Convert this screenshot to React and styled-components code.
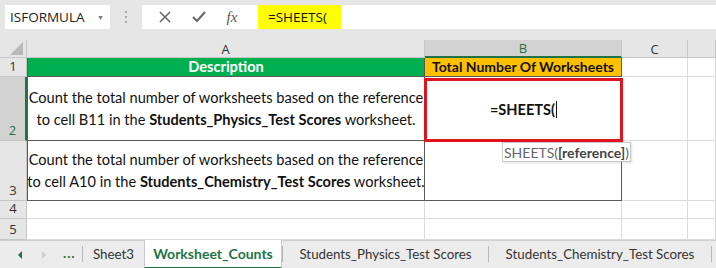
import styled, { createGlobalStyle } from "styled-components";

const Global = createGlobalStyle`
  html, body { margin: 0; padding: 0; background: #e6e6e6; }
  body { width: 716px; height: 268px; overflow: hidden; font-family: "Lato", "Open Sans", sans-serif; }
`;

const Screen = styled.div`
  width: 716px;
  height: 268px;
  display: flex;
  flex-direction: column;
  background: #e6e6e6;
  overflow: hidden;
  & > * { flex-shrink: 0; }
`;

const FormulaBar = styled.div`
  height: 40px;
  display: flex;
  align-items: flex-start;
  padding-top: 5px;
  box-sizing: border-box;
`;

const NameBox = styled.div`
  margin-left: 5px;
  width: 105px;
  height: 24px;
  background: #fff;
  display: flex;
  align-items: center;
  justify-content: space-between;
  padding: 0 6px 0 5px;
  box-sizing: border-box;
  font-family: "Open Sans", sans-serif;
  font-size: 13.5px;
  color: #222;
`;

const Caret = styled.span`
  font-size: 7px;
  color: #777;
`;

const Grip = styled.div`
  width: 32px;
  height: 24px;
  display: flex;
  flex-direction: column;
  align-items: center;
  justify-content: center;
  gap: 3px;
  span { width: 2px; height: 2px; background: #aaa; }
`;

const ButtonsBox = styled.div`
  width: 111px;
  height: 24px;
  background: #fff;
  display: flex;
  align-items: center;
  justify-content: space-around;
  padding: 0 6px;
  box-sizing: border-box;
  color: #666;
`;

const Fx = styled.span`
  font-family: "Liberation Serif", serif;
  font-style: italic;
  font-size: 15px;
  color: #555;
`;

const Input = styled.div`
  flex: 1;
  height: 24px;
  background: #fff;
  display: flex;
  align-items: stretch;
  padding-left: 5px;
`;

const Highlight = styled.span`
  background: #ffff00;
  display: flex;
  align-items: center;
  padding: 0 14px 0 10px;
  font-family: "Open Sans", sans-serif;
  font-size: 13.5px;
  color: #111;
`;

const Sheet = styled.div`
  display: grid;
  grid-template-columns: 27px 398px 197px 66px 28px;
  grid-template-rows: 18px 19px 64px 60px 18px 21px;
  background: #fff;
  position: relative;
`;

const Corner = styled.div`
  background: #e6e6e6;
  border-right: 1px solid #c6c6c6;
  border-bottom: 1px solid #c6c6c6;
  box-sizing: border-box;
  position: relative;
  &::after {
    content: "";
    position: absolute;
    right: 3px;
    bottom: 2px;
    border-left: 13px solid transparent;
    border-bottom: 13px solid #b9b9b9;
  }
`;

const ColHead = styled.div`
  background: ${(p) => (p.$active ? "#d2d2d2" : "#e6e6e6")};
  color: ${(p) => (p.$active ? "#217346" : "#333")};
  border-right: 1px solid #c6c6c6;
  border-bottom: ${(p) => (p.$active ? "2px solid #217346" : "1px solid #c6c6c6")};
  box-sizing: border-box;
  display: flex;
  align-items: center;
  justify-content: center;
  font-family: "Open Sans", sans-serif;
  font-size: 13px;
`;

const RowHead = styled.div`
  background: ${(p) => (p.$active ? "#d2d2d2" : "#e6e6e6")};
  color: ${(p) => (p.$active ? "#217346" : "#333")};
  border-right: ${(p) => (p.$active ? "2px solid #217346" : "1px solid #c6c6c6")};
  border-bottom: 1px solid #c6c6c6;
  box-sizing: border-box;
  display: flex;
  align-items: flex-end;
  justify-content: center;
  padding-bottom: 1px;
  font-family: "Open Sans", sans-serif;
  font-size: 13px;
`;

const Cell = styled.div`
  box-sizing: border-box;
  border-right: 1px solid ${(p) => (p.$dark ? "#5a5a5a" : "#dadada")};
  border-bottom: 1px solid ${(p) => (p.$dark ? "#5a5a5a" : "#dadada")};
  border-left: ${(p) => (p.$left ? "1px solid #5a5a5a" : "none")};
  background: ${(p) => p.$bg || "#fff"};
  color: ${(p) => p.$color || "#111"};
  font-weight: ${(p) => (p.$bold ? 700 : 400)};
  font-size: ${(p) => p.$size || 14.6}px;
  line-height: 22px;
  display: flex;
  align-items: center;
  justify-content: center;
  text-align: center;
  white-space: nowrap;
  overflow: visible;
`;

const Selected = styled(Cell)`
  border: 3px solid #e0141e;
  margin: 1px -1px -1px -1px;
  position: relative;
  z-index: 2;
`;

const Cursor = styled.span`
  display: inline-block;
  width: 1px;
  height: 17px;
  background: #111;
  margin-left: 1px;
  vertical-align: -3px;
`;

const Tip = styled.div`
  position: absolute;
  left: 502px;
  top: 102px;
  width: 129px;
  height: 20px;
  box-sizing: border-box;
  background: #fff;
  border: 1px solid #c8c8c8;
  box-shadow: 1px 1px 2px rgba(0, 0, 0, 0.12);
  font-size: 14px;
  color: #666;
  display: flex;
  align-items: center;
  justify-content: center;
  z-index: 3;
  white-space: nowrap;
  b { color: #444; }
`;

const TabBar = styled.div`
  flex: 1;
  display: flex;
  align-items: stretch;
  background: #ececec;
  border-top: 1px solid #d0d0d0;
  font-family: "Lato", sans-serif;
  font-size: 13.3px;
  color: #333;
  white-space: nowrap;
  & > * { flex-shrink: 0; }
`;

const Nav = styled.div`
  width: 82px;
  display: flex;
  align-items: center;
  padding-left: 18px;
  box-sizing: border-box;
`;

const Arrow = styled.span`
  width: 0;
  height: 0;
  border-top: 4px solid transparent;
  border-bottom: 4px solid transparent;
  ${(p) => (p.$right ? "border-left: 4px solid #cfcfcf; margin-left: 20px;" : "border-right: 4px solid #217346;")}
`;

const Dots = styled.span`
  margin-left: 17px;
  color: #217346;
  font-weight: 700;
  letter-spacing: 1px;
  padding-bottom: 4px;
`;

const Tab = styled.div`
  width: ${(p) => p.$w}px;
  box-sizing: border-box;
  display: flex;
  align-items: center;
  justify-content: center;
  border-left: 1px solid #b8b8b8;
  margin: 5px 0 7px;
  ${(p) =>
    p.$active &&
    `background:#fff; color:#217346; font-weight:700; font-size:14px; border-left:1px solid #c6c6c6; border-right:1px solid #c6c6c6; border-bottom: 2px solid #217346; margin: -1px 0 0;`}
`;

const Tail = styled.div`
  width: 5px;
  margin: 5px 0 7px;
  border-left: 1px solid #b8b8b8;
`;

export default function App() {
  return (
    <Screen>
      <Global />
      <FormulaBar>
        <NameBox>
          ISFORMULA <Caret>▼</Caret>
        </NameBox>
        <Grip>
          <span />
          <span />
          <span />
        </Grip>
        <ButtonsBox>
          <svg width="14" height="14" viewBox="0 0 14 14">
            <path d="M2 2 L12 12 M12 2 L2 12" stroke="#666" strokeWidth="1.5" />
          </svg>
          <svg width="16" height="14" viewBox="0 0 16 14">
            <path d="M2 7 L6 11 L14 2" stroke="#666" strokeWidth="2" fill="none" />
          </svg>
          <Fx>fx</Fx>
        </ButtonsBox>
        <Input>
          <Highlight>=SHEETS(</Highlight>
        </Input>
      </FormulaBar>
      <Sheet>
        <Corner />
        <ColHead>A</ColHead>
        <ColHead $active>B</ColHead>
        <ColHead>C</ColHead>
        <ColHead />

        <RowHead>1</RowHead>
        <Cell $left $dark $bg="#00b050" $color="#fff" $bold>
          Description
        </Cell>
        <Cell $dark $bg="#ffc000" $bold $size={14}>
          Total Number Of Worksheets
        </Cell>
        <Cell />
        <Cell />

        <RowHead $active>2</RowHead>
        <Cell $left $dark>
          <div>
            Count the total number of worksheets based on the reference
            <br />
            to cell B11 in the <b>Students_Physics_Test Scores</b> worksheet.
          </div>
        </Cell>
        <Selected $bold>
          <span>
            =SHEETS(
            <Cursor />
          </span>
        </Selected>
        <Cell />
        <Cell />

        <RowHead>3</RowHead>
        <Cell $left $dark>
          <div>
            Count the total number of worksheets based on the reference
            <br />
            to cell A10 in the <b>Students_Chemistry_Test Scores</b> worksheet.
          </div>
        </Cell>
        <Cell $dark />
        <Cell />
        <Cell />

        <RowHead>4</RowHead>
        <Cell />
        <Cell />
        <Cell />
        <Cell />

        <RowHead>5</RowHead>
        <Cell />
        <Cell />
        <Cell />
        <Cell />

        <Tip>
          SHEETS(<b>[reference]</b>)
        </Tip>
      </Sheet>
      <TabBar>
        <Nav>
          <Arrow />
          <Arrow $right />
          <Dots>...</Dots>
        </Nav>
        <Tab $w={62}>Sheet3</Tab>
        <Tab $active $w={138}>
          Worksheet_Counts
        </Tab>
        <Tab $w={206}>Students_Physics_Test Scores</Tab>
        <Tab $w={223}>Students_Chemistry_Test Scores</Tab>
        <Tail />
      </TabBar>
    </Screen>
  );
}
